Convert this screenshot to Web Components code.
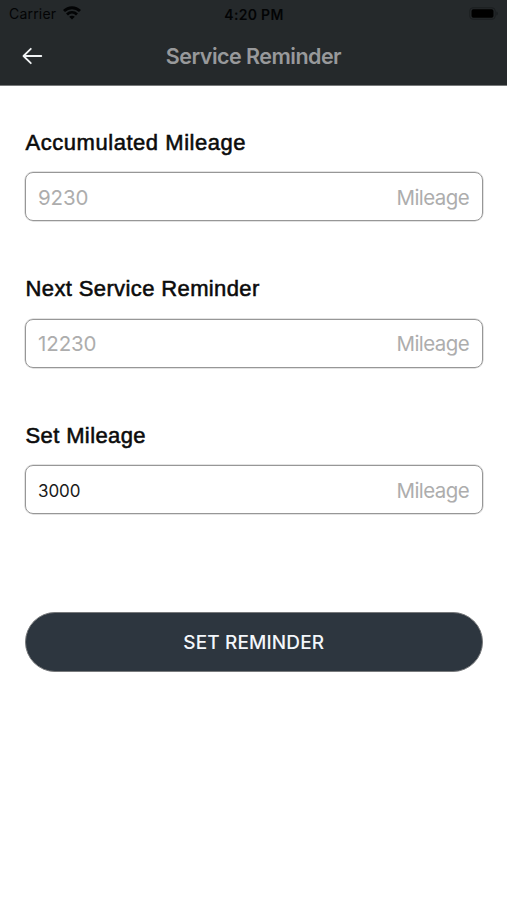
<!DOCTYPE html>
<html lang="en">
<head>
<meta charset="utf-8">
<title>Service Reminder</title>
<style>
html,body{margin:0;height:100%;background:#fff}
body{font-family:Inter,"Liberation Sans",sans-serif;overflow:hidden}
</style>
</head>
<body>
<reminder-screen></reminder-screen>
<script>
const define = (name, html) => customElements.define(name, class extends HTMLElement {
  constructor() {
    super();
    this.attachShadow({mode: 'open'}).innerHTML = html;
  }
});

define('status-bar', `
<style>
:host{display:grid;grid-template-columns:1fr auto 1fr;align-items:center;height:27px;padding:0 8px 0 9px;color:#030405;font-size:14px;line-height:17px}
.left{display:flex;align-items:center;gap:7px;letter-spacing:.2px}
.left svg{margin-top:-2px}
.time{font-weight:600;font-size:14px;letter-spacing:.3px;padding-top:1px}
.right{justify-self:end;display:flex}
svg{display:block}
</style>
<div class="left"><span>Carrier</span>
<svg width="18" height="14" viewBox="0 0 18 14" fill="none" stroke="#030405" stroke-width="2.8"><path d="M1 5.1C5.5.6 12.5.6 17 5.1M4 8.5c2.9-2.8 7.1-2.8 10 0"/><path d="M9 13.6 6.2 10.8c1.6-1.5 4-1.5 5.6 0z" fill="#030405" stroke="none"/></svg></div>
<span class="time">4:20 PM</span>
<div class="right"><svg width="30" height="13" viewBox="0 0 30 13"><rect x=".8" y=".8" width="25.4" height="11.4" rx="3" fill="none" stroke="#1b1e20"/><rect x="2.5" y="2.2" width="22" height="8.6" rx="1.8" fill="#000"/><path d="M27.5 4.5c1.6.6 1.6 3.4 0 4z" fill="#171a1c"/></svg></div>`);

define('nav-bar', `
<style>
:host{display:grid;grid-template-columns:54px 1fr 54px;align-items:center;height:58px}
button{all:unset;display:flex;padding-left:22px}
h1{margin:0;text-align:center;font-size:21.5px;line-height:28px;font-weight:600;color:#98999b;letter-spacing:-.53px}
</style>
<button aria-label="Back"><svg width="22" height="20" viewBox="0 0 22 20" fill="none" stroke="#f0f3f4" stroke-width="1.8" stroke-linecap="round" stroke-linejoin="round"><path d="M8.8 2.8 1.5 10l7.3 7.2M1.7 10h17.6"/></svg></button>
<h1><slot></slot></h1>`);

define('mileage-field', `
<style>
:host{display:block;height:146.5px;box-sizing:border-box}
.label{display:block;padding-left:.5px;font:22px/26px "Liberation Sans",sans-serif;color:#0b0b0b;-webkit-text-stroke:.55px #0b0b0b;letter-spacing:var(--label-spacing,.38px)}
.box{display:flex;justify-content:space-between;align-items:center;box-sizing:border-box;height:49px;margin-top:16.5px;padding:2px 12.5px 0 12px;border:1px solid #979797;border-radius:8px;box-shadow:0 0 0 .5px #c8c8c8;font-size:20.5px;line-height:26px;color:#adadad}
.value{letter-spacing:-.1px}
.unit{letter-spacing:-.6px}
:host([filled]) .value{color:#1a1a1a;font-size:17px;letter-spacing:-.1px}
</style>
<span class="label"><slot name="label"></slot></span>
<div class="box"><span class="value"><slot></slot></span><span class="unit">Mileage</span></div>`);

define('pill-button', `
<style>
:host{display:block}
button{all:unset;display:flex;align-items:center;justify-content:center;box-sizing:border-box;width:100%;height:60px;padding-top:2px;border:1px solid #77797b;border-radius:30px;background:#2d363f;color:#f3f7fb;font-size:19px;line-height:24px;font-weight:500;letter-spacing:.12px}
</style>
<button><slot></slot></button>`);

define('reminder-screen', `
<style>
:host{display:block;width:507px;height:900px;background:#fff}
header{height:85px;background:#25292b;border-bottom:1px solid #77797a}
main{padding:43.5px 24.5px 0 25px}
pill-button{margin-top:43px}
.wide{--label-spacing:.54px}
</style>
<header><status-bar></status-bar><nav-bar>Service Reminder</nav-bar></header>
<main>
<mileage-field class="wide"><span slot="label">Accumulated Mileage</span>9230</mileage-field>
<mileage-field><span slot="label">Next Service Reminder</span>12230</mileage-field>
<mileage-field filled><span slot="label">Set Mileage</span>3000</mileage-field>
<pill-button>SET REMINDER</pill-button>
</main>`);
</script>
</body>
</html>
